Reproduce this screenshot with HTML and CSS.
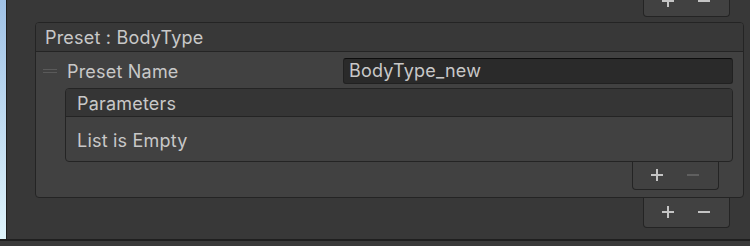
FILE: index.html
```html
<!DOCTYPE html>
<html>
<head>
<meta charset="utf-8">
<link rel="stylesheet" href="styles.css">
</head>
<body>
<div class="screen">
  <div class="strip"></div>
  <div class="main">
    <div class="btnrow">
      <div class="tab tab-top">
        <svg class="ic" width="14" height="14" viewBox="0 0 14 14"><path d="M7 1v12M1 7h12" stroke="#c4c4c4" stroke-width="2"/></svg>
        <svg class="ic" width="14" height="14" viewBox="0 0 14 14"><path d="M1 7h12" stroke="#c4c4c4" stroke-width="2"/></svg>
      </div>
    </div>
    <div class="panel">
      <div class="panel-head">Preset : BodyType</div>
      <div class="panel-body">
        <div class="row">
          <span class="handle"></span>
          <span class="label">Preset Name</span>
          <div class="field">BodyType_new</div>
        </div>
        <div class="list">
          <div class="list-head">Parameters</div>
          <div class="list-body">List is Empty</div>
        </div>
        <div class="btnrow">
          <div class="tab">
            <svg class="ic" width="14" height="14" viewBox="0 0 14 14"><path d="M7 1v12M1 7h12" stroke="#c4c4c4" stroke-width="2"/></svg>
            <svg class="ic" width="14" height="14" viewBox="0 0 14 14"><path d="M1 7h12" stroke="#5f5f5f" stroke-width="2"/></svg>
          </div>
        </div>
      </div>
    </div>
    <div class="btnrow">
      <div class="tab tab-outer">
        <svg class="ic" width="14" height="14" viewBox="0 0 14 14"><path d="M7 1v12M1 7h12" stroke="#c4c4c4" stroke-width="2"/></svg>
        <svg class="ic" width="14" height="14" viewBox="0 0 14 14"><path d="M1 7h12" stroke="#c4c4c4" stroke-width="2"/></svg>
      </div>
    </div>
  </div>
</div>
<div class="footer"></div>
</body>
</html>
```
FILE: styles.css
```css
* { box-sizing: border-box; }
html, body { margin: 0; padding: 0; }
body {
  width: 750px;
  height: 246px;
  overflow: hidden;
  background: #383838;
  font-family: Inter, "Noto Sans", sans-serif;
  font-size: 18px;
  letter-spacing: 0.2px;
  color: #c8c8c8;
}
.screen {
  display: flex;
  height: 239px;
}
.strip {
  width: 7px;
  flex: none;
  background: linear-gradient(#a0c2e6, #dff4fc);
  border-right: 1px solid #1e1e1e;
}
.main {
  flex: 1;
  padding: 0 6px 0 28px;
  display: flex;
  flex-direction: column;
}
.btnrow {
  display: flex;
  justify-content: flex-end;
  padding-right: 14px;
}
.tab {
  width: 87px;
  height: 28px;
  background: #414141;
  border: 1px solid #242424;
  border-top: none;
  border-radius: 0 0 4px 4px;
  display: flex;
  align-items: center;
  justify-content: space-between;
  padding: 0 18px 1px 17px;
}
.tab-top {
  height: 17px;
  align-items: flex-start;
  overflow: hidden;
}
.tab-top .ic { margin-top: -6px; }
.tab-outer { height: 30px; }
.panel {
  margin-top: 5px;
  border: 1px solid #242424;
  border-radius: 4px;
  background: #414141;
}
.panel-head {
  height: 29px;
  background: #383838;
  border-bottom: 1px solid #242424;
  border-radius: 3px 3px 0 0;
  padding: 1px 0 0 9px;
  line-height: 28px;
}
.panel-body {
  padding: 6px 10px 7px 29px;
}
.row {
  display: flex;
  align-items: center;
  margin-left: -22px;
  height: 26px;
}
.handle {
  width: 14px;
  height: 4px;
  border-top: 1px solid #5a5a5a;
  border-bottom: 1px solid #5a5a5a;
  margin-right: 10px;
  flex: none;
}
.label {
  width: 276px;
  flex: none;
}
.field {
  flex: 1;
  height: 26px;
  background: #2a2a2a;
  border: 1px solid #212121;
  border-top-color: #0d0d0d;
  border-radius: 3px;
  padding-left: 5px;
  line-height: 24px;
}
.list {
  margin-top: 4px;
  border: 1px solid #242424;
  border-radius: 4px;
  background: #414141;
}
.list-head {
  height: 28px;
  background: #353535;
  border-bottom: 1px solid #242424;
  border-radius: 3px 3px 0 0;
  padding: 1px 0 0 11px;
  line-height: 27px;
}
.list-body {
  height: 44px;
  padding: 2px 0 0 11px;
  line-height: 44px;
}
.footer {
  height: 7px;
  background: #3a3a3a;
  border-top: 2px solid #1f1f1f;
}
```
